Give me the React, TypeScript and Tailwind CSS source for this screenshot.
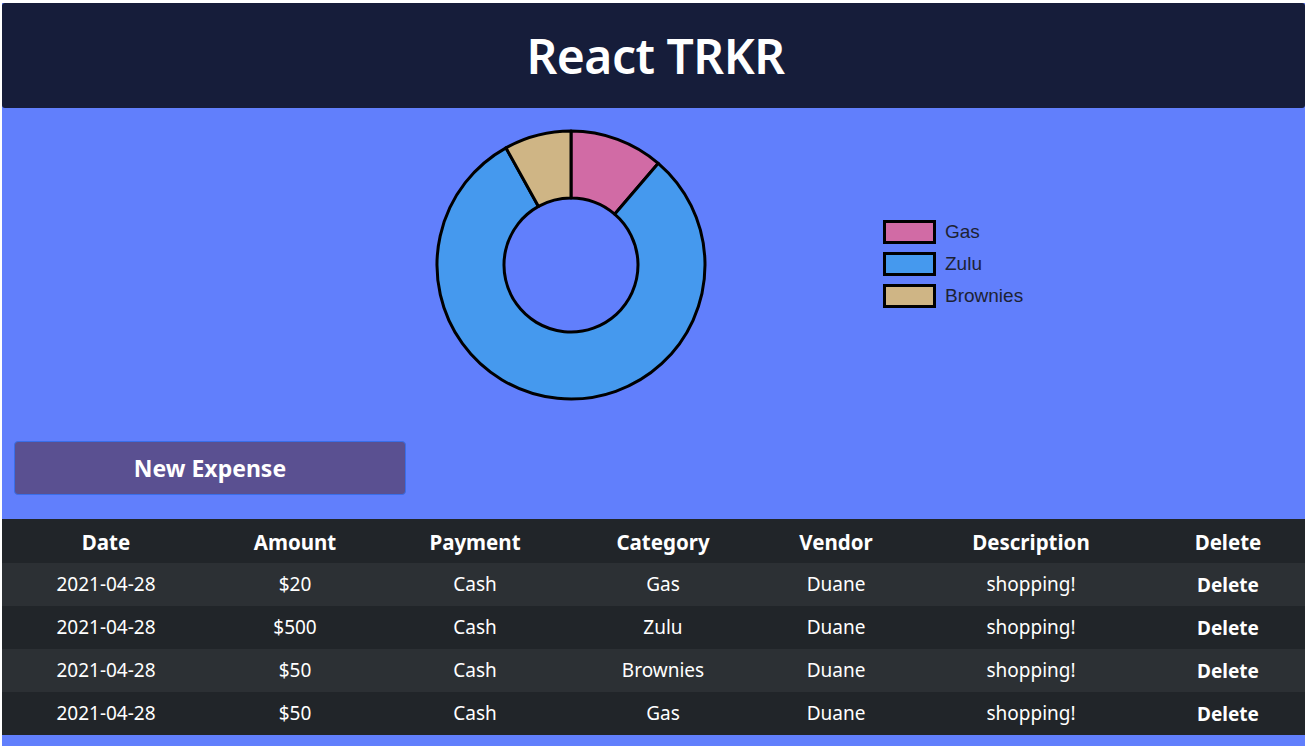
import React from 'react';

type Expense = {
  date: string;
  amount: number;
  payment: string;
  category: string;
  vendor: string;
  description: string;
};

const expenses: Expense[] = [
  { date: '2021-04-28', amount: 20, payment: 'Cash', category: 'Gas', vendor: 'Duane', description: 'shopping!' },
  { date: '2021-04-28', amount: 500, payment: 'Cash', category: 'Zulu', vendor: 'Duane', description: 'shopping!' },
  { date: '2021-04-28', amount: 50, payment: 'Cash', category: 'Brownies', vendor: 'Duane', description: 'shopping!' },
  { date: '2021-04-28', amount: 50, payment: 'Cash', category: 'Gas', vendor: 'Duane', description: 'shopping!' },
];

const categoryColors: Record<string, string> = {
  Gas: '#d16ba5',
  Zulu: '#4599ee',
  Brownies: '#cfb585',
};

const headers = ['Date', 'Amount', 'Payment', 'Category', 'Vendor', 'Description', 'Delete'];
const colWidths = ['w-[208px]', 'w-[170px]', 'w-[190px]', 'w-[186px]', 'w-[160px]', 'w-[230px]', 'w-[159px]'];

function arcPath(cx: number, cy: number, r1: number, r2: number, a0: number, a1: number) {
  // angles in radians, 0 = top, clockwise
  const p = (r: number, a: number) => [cx + r * Math.sin(a), cy - r * Math.cos(a)];
  const large = a1 - a0 > Math.PI ? 1 : 0;
  const [x0, y0] = p(r2, a0);
  const [x1, y1] = p(r2, a1);
  const [x2, y2] = p(r1, a1);
  const [x3, y3] = p(r1, a0);
  return `M${x0} ${y0} A${r2} ${r2} 0 ${large} 1 ${x1} ${y1} L${x2} ${y2} A${r1} ${r1} 0 ${large} 0 ${x3} ${y3} Z`;
}

function Doughnut() {
  const totals: { name: string; value: number }[] = [];
  expenses.forEach((e) => {
    const t = totals.find((x) => x.name === e.category);
    if (t) t.value += e.amount;
    else totals.push({ name: e.category, value: e.amount });
  });
  const sum = totals.reduce((s, t) => s + t.value, 0);
  let angle = 0;
  return (
    <svg width="280" height="280" viewBox="0 0 280 280">
      {totals.map((t) => {
        const a0 = angle;
        const a1 = angle + (t.value / sum) * Math.PI * 2;
        angle = a1;
        return (
          <path
            key={t.name}
            d={arcPath(140, 140, 67, 134, a0, a1)}
            fill={categoryColors[t.name]}
            stroke="#000"
            strokeWidth={3}
            strokeLinejoin="round"
          />
        );
      })}
    </svg>
  );
}

export default function App() {
  return (
    <div className="min-h-[746px] bg-white pt-[3px] pl-[2px] font-['Noto_Sans','Open_Sans',sans-serif]">
      <div className="bg-[#617ffc] pb-[11px]">
        {/* Header */}
        <header className="h-[105px] bg-[#161d3a] rounded-[3px] flex items-center justify-center pl-[4px]">
          <h1 className="text-white text-[48px] font-semibold leading-none tracking-[-0.5px]">React TRKR</h1>
        </header>

        {/* Chart */}
        <div className="flex items-start h-[320px]">
          <div className="w-[429px]" />
          <div className="mt-[17px] w-[280px]">
            <Doughnut />
          </div>
          <div className="ml-[172px] mt-[113px] flex flex-col gap-[10px] font-['Liberation_Sans',Arial,sans-serif] text-[19px] text-[#1d2233]">
            {Object.keys(categoryColors).map((name) => (
              <div key={name} className="flex items-center gap-[9px] h-[22px]">
                <span className="w-[53px] h-[24px] border-[3px] border-black" style={{ backgroundColor: categoryColors[name] }} />
                <span>{name}</span>
              </div>
            ))}
          </div>
        </div>

        {/* Button */}
        <div className="px-[12px] pt-[13px] pb-[24px]">
          <button className="w-[392px] h-[54px] bg-[#5a5091] border border-[#3a6ee8] rounded-[4px] text-white text-[23px] font-bold">
            New Expense
          </button>
        </div>

        {/* Table */}
        <table className="w-full table-fixed border-collapse text-white text-[19px]">
          <thead>
            <tr className="bg-[#212529] h-[44px]">
              {headers.map((h, i) => (
                <th key={h} className={`${colWidths[i]} text-[20.5px] font-bold text-center pt-[2px] ${i === 6 ? 'pl-[5px]' : ''}`}>{h}</th>
              ))}
            </tr>
          </thead>
          <tbody>
            {expenses.map((e, i) => (
              <tr key={i} className={`h-[43px] ${i % 2 === 0 ? 'bg-[#2c3034]' : 'bg-[#212529]'}`}>
                <td className="text-center">{e.date}</td>
                <td className="text-center">${e.amount}</td>
                <td className="text-center">{e.payment}</td>
                <td className="text-center">{e.category}</td>
                <td className="text-center">{e.vendor}</td>
                <td className="text-center">{e.description}</td>
                <td className="text-center font-bold pl-[5px] pt-[2px]">Delete</td>
              </tr>
            ))}
          </tbody>
        </table>
      </div>
    </div>
  );
}
